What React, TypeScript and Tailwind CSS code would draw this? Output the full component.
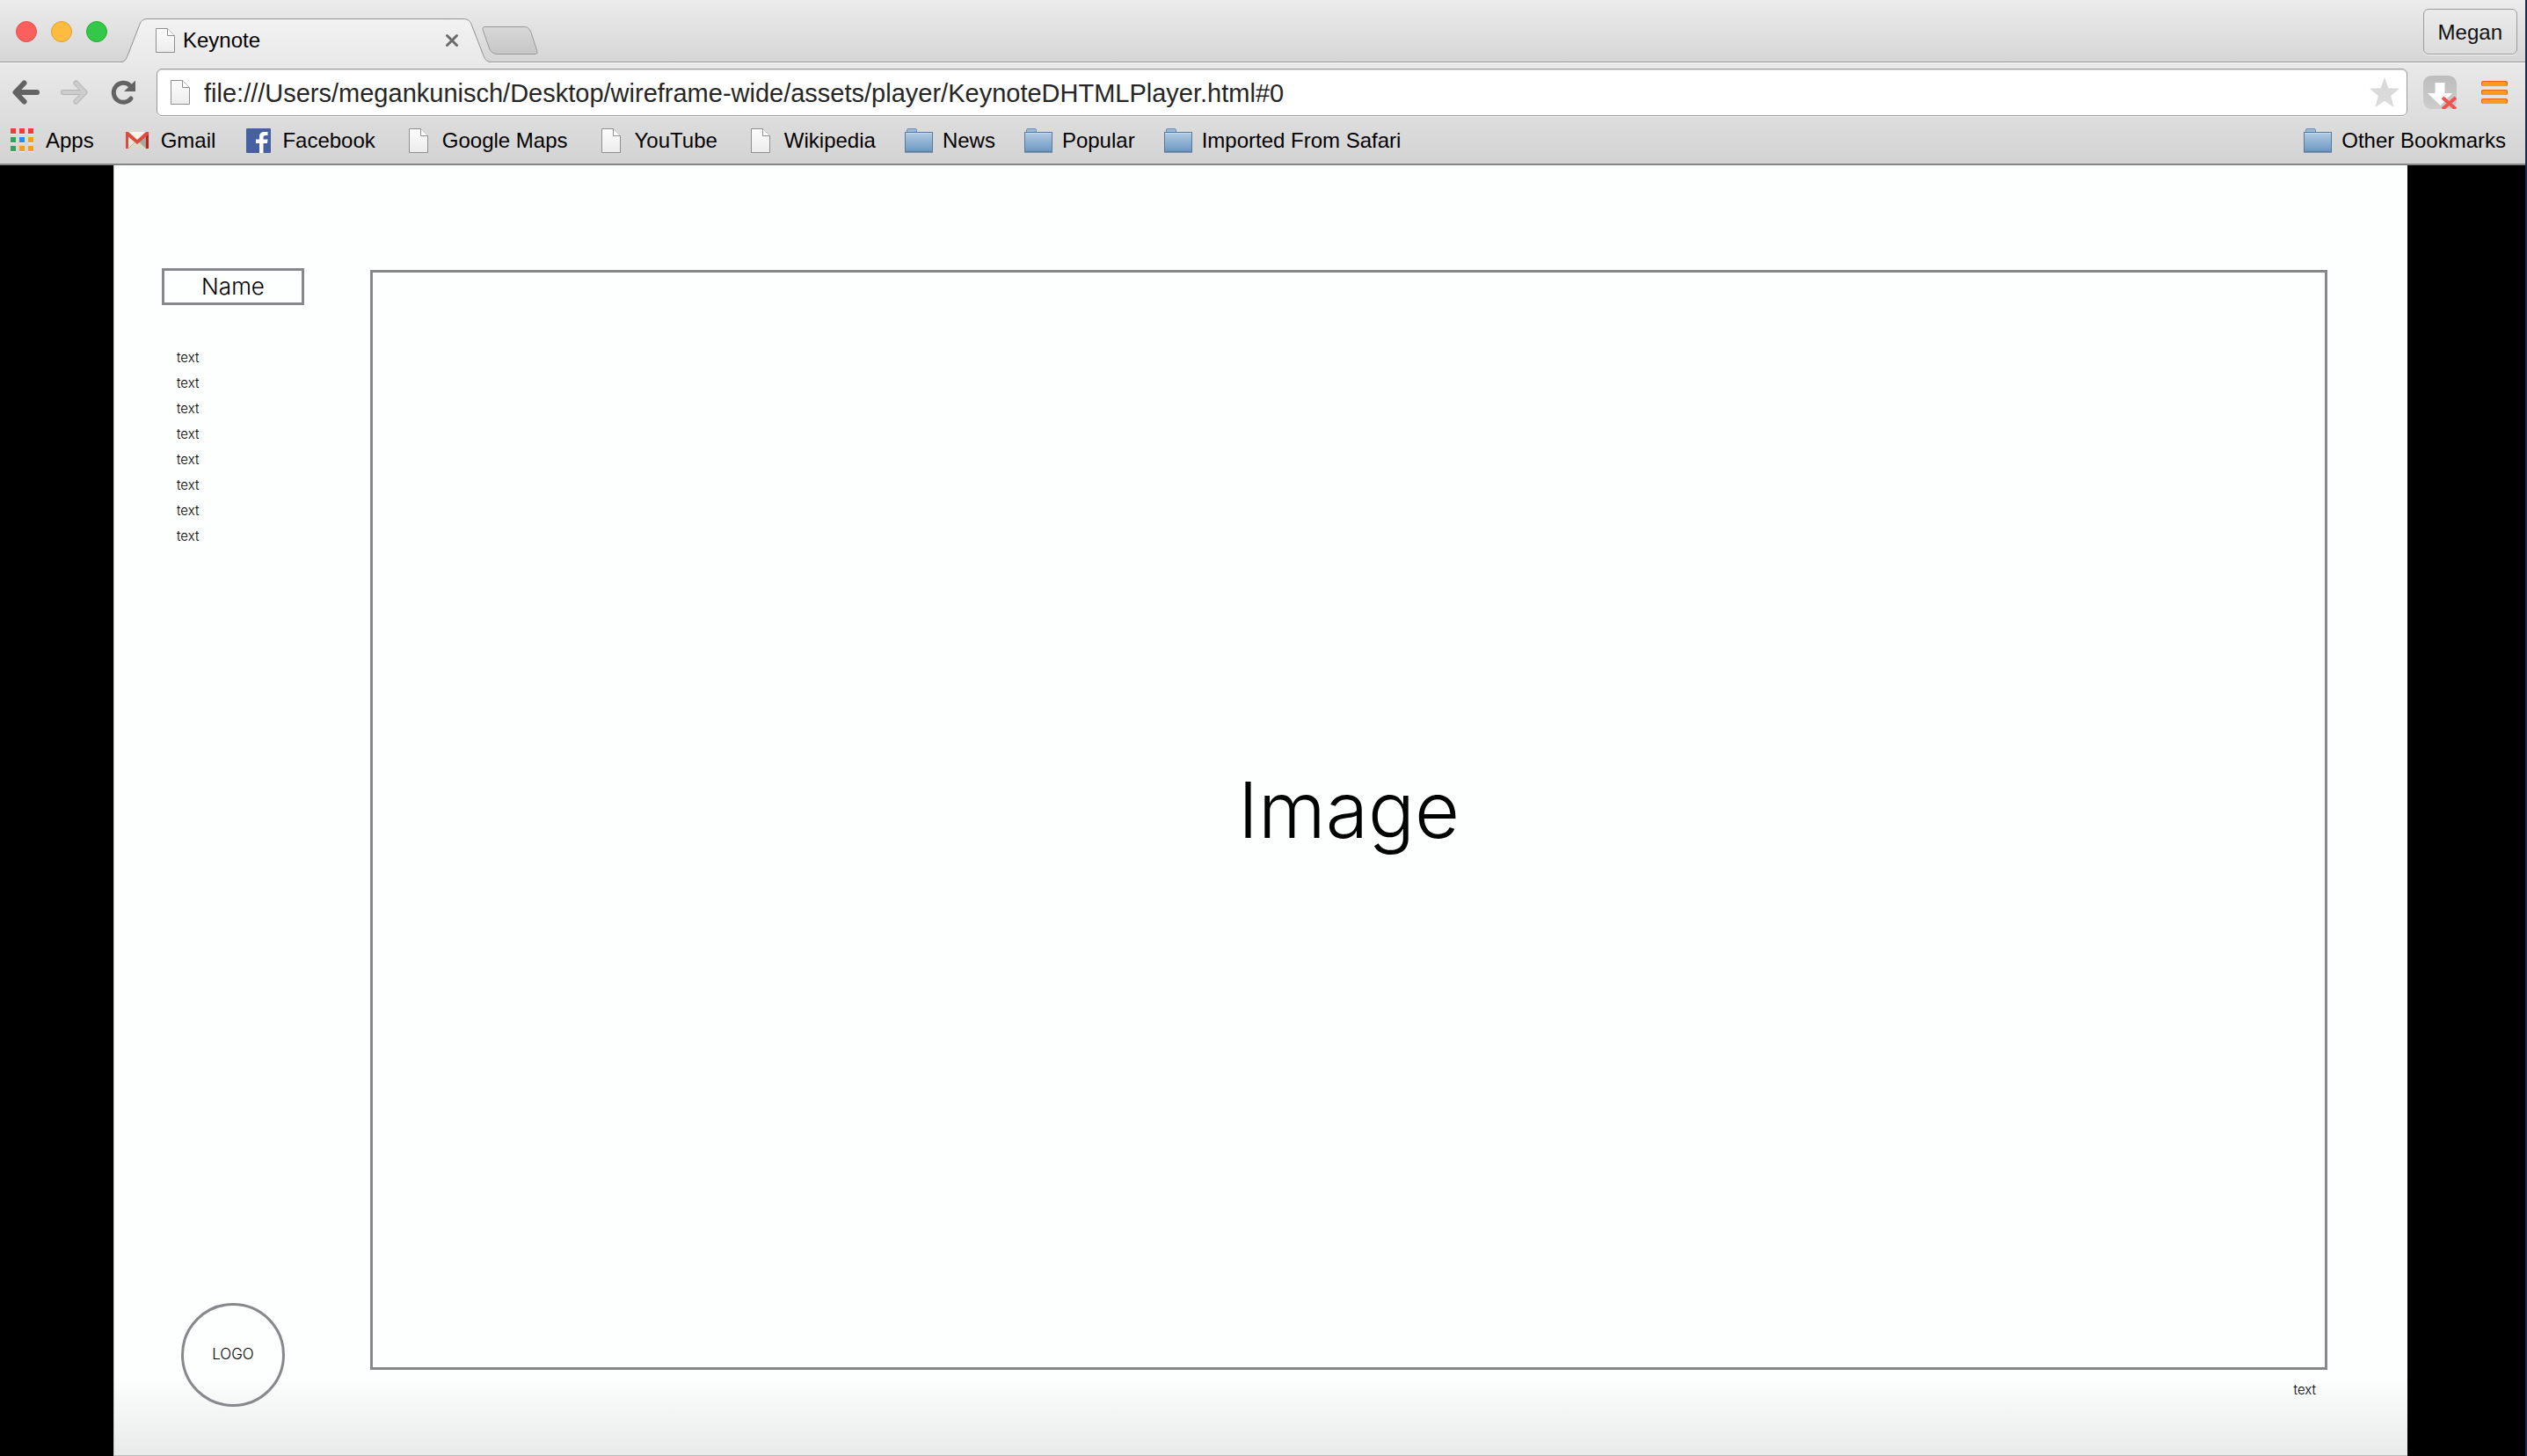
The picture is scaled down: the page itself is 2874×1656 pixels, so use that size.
import React from "react";

function PageIcon({ className }: { className?: string }) {
  return (
    <svg viewBox="0 0 22 28" className={className} aria-hidden="true">
      <defs>
        <linearGradient id="page-fill" x1="0" y1="0" x2="0" y2="1">
          <stop offset="0" stopColor="#fdfdfd" />
          <stop offset="1" stopColor="#ececec" />
        </linearGradient>
      </defs>
      <path d="M0.5 0.5H13.5L21.5 8.500V27.500H0.500Z" fill="url(#page-fill)" stroke="#8f8f8f" />
      <path d="M13.500 0.500V8.500H21.500" fill="#fff" stroke="#8f8f8f" />
    </svg>
  );
}

function FolderIcon() {
  return (
    <svg viewBox="0 0 32 28" className="h-7 w-8" aria-hidden="true">
      <defs>
        <linearGradient id="folder-fill" x1="0" y1="0" x2="0" y2="1">
          <stop offset="0" stopColor="#b3cbe2" />
          <stop offset="1" stopColor="#6b97c3" />
        </linearGradient>
      </defs>
      <path d="M2.500 5V2Q2.500 0.500 4 0.500H12Q13.500 0.500 13.500 2V5" fill="#9db9d8" stroke="#6d8db0" />
      <rect x="0.500" y="4.500" width="31" height="22" fill="url(#folder-fill)" stroke="#56799c" />
      <path d="M1 5.500H31" stroke="#c9dcec" />
      <path d="M0 27.500H32" stroke="#8d9aa6" />
    </svg>
  );
}

function AppsIcon() {
  const colors = ["#f33a36", "#f33a36", "#f33a36", "#36a05c", "#2a8cf2", "#f0a122", "#36a05c", "#f0a122", "#f0a122"];
  return (
    <svg viewBox="0 0 26 27" className="h-[27px] w-[26px]" aria-hidden="true">
      {colors.map((c, i) => (
        <g key={i}>
          <rect x={(i % 3) * 10} y={Math.floor(i / 3) * 10 + 1} width="6" height="6" fill="#f6f6f6" />
          <rect x={(i % 3) * 10} y={Math.floor(i / 3) * 10} width="6" height="6" fill={c} />
        </g>
      ))}
    </svg>
  );
}

function GmailIcon() {
  return (
    <svg viewBox="0 0 26 20" className="h-5 w-[26px]" aria-hidden="true">
      <rect width="26" height="19" fill="#e9e6d8" />
      <path d="M3 0H23L13 9Z" fill="#f7f4ea" />
      <path d="M13 11L23 19V3Z" fill="#a9a799" />
      <path d="M3 19L13 10L23 19Z" fill="#dcd9c6" />
      <path d="M3 19L10 12M23 19L16 12" stroke="#bab7a4" fill="none" />
      <path d="M0 0H3V19H0Z" fill="#e04a3f" />
      <path d="M23 0H26V19H23Z" fill="#b5281f" />
      <path d="M0 0H3L13 9L23 0H26V3L13 14L0 3Z" fill="#e04a3f" />
    </svg>
  );
}

function FacebookIcon() {
  return (
    <svg viewBox="0 0 28 28" className="size-7" aria-hidden="true">
      <rect width="28" height="28" rx="1" fill="#4660a2" />
      <path d="M15 28V17H11V12.500H15V9.500C15 5.500 17.500 4 20.500 4H24.500V8H22C20 8 19.500 9 19.500 10.500V12.500H24.500L24 17H19.500V28Z" fill="#fff" />
    </svg>
  );
}

const page = <PageIcon className="h-7 w-[22px]" />;

const bookmarks = [
  { label: "Apps", icon: <AppsIcon /> },
  { label: "Gmail", icon: <GmailIcon /> },
  { label: "Facebook", icon: <FacebookIcon /> },
  { label: "Google Maps", icon: page },
  { label: "YouTube", icon: page },
  { label: "Wikipedia", icon: page },
  { label: "News", icon: <FolderIcon /> },
  { label: "Popular", icon: <FolderIcon /> },
  { label: "Imported From Safari", icon: <FolderIcon /> },
];

function Bookmark({ label, icon }: { label: string; icon: React.ReactNode }) {
  return (
    <a href="#" className="flex items-center gap-[11px] whitespace-nowrap">
      <span className="flex w-8 justify-center">{icon}</span>
      {label}
    </a>
  );
}

function TabStrip() {
  return (
    <div className="flex h-[72px] items-end justify-between bg-linear-to-b from-[#ececec] to-[#d5d5d5] shadow-[inset_0_-1px_0_#f8f8f8,inset_0_-2px_0_#989898]">
      <div className="flex items-end">
        <div className="flex gap-4 pb-6 pl-[18px]">
          <button aria-label="Close window" className="size-6 rounded-full border border-[#e2504b] bg-[#fc605c]" />
          <button aria-label="Minimize window" className="size-6 rounded-full border border-[#dfa033] bg-[#fdbc40]" />
          <button aria-label="Zoom window" className="size-6 rounded-full border border-[#27a835] bg-[#34c84a]" />
        </div>
        <div className="relative ml-4 flex h-[51px] w-[422px] items-center pb-px pl-[39px]">
          <svg viewBox="0 0 422 51" preserveAspectRatio="none" className="absolute inset-0 size-full" aria-hidden="true">
            <defs>
              <linearGradient id="tab-fill" x1="0" y1="0" x2="0" y2="1">
                <stop offset="0" stopColor="#f2f2f2" />
                <stop offset="1" stopColor="#e9e9e9" />
              </linearGradient>
            </defs>
            <path
              d="M0 49.500C5 49 6 45 8 40L20 9C22 3 24 0.500 30 0.500H388C395 0.500 397 3 399 9L411 40C413 45 414 49 420 49.500V51H0Z"
              fill="url(#tab-fill)"
            />
            <path
              d="M0 49.500C5 49 6 45 8 40L20 9C22 3 24 0.500 30 0.500H388C395 0.500 397 3 399 9L411 40C413 45 414 49 420 49.500"
              fill="none"
              stroke="#929292"
            />
          </svg>
          <button className="relative flex flex-1 items-center gap-[9px] text-left text-2xl leading-7">
            <PageIcon className="h-7 w-[22px]" />
            Keynote
          </button>
          <button aria-label="Close tab" className="relative mr-[38px]">
            <svg viewBox="0 0 16 16" className="size-4" aria-hidden="true">
              <path d="M2.500 2.500L13.500 13.500M13.500 2.500L2.500 13.500" stroke="#6b6b6b" strokeWidth="3" strokeLinecap="round" />
            </svg>
          </button>
        </div>
        <button aria-label="New tab" className="-ml-3 pb-[9px]">
          <svg viewBox="0 0 64 34" className="h-[34px] w-16" aria-hidden="true">
            <defs>
              <linearGradient id="newtab-fill" x1="0" y1="0" x2="0" y2="1">
                <stop offset="0" stopColor="#d8d8d8" />
                <stop offset="1" stopColor="#c6c6c6" />
              </linearGradient>
            </defs>
            <path
              d="M4 1.500H47C52 1.500 54 3 56 8L62.500 28C63.500 31 63 32.500 60 32.500H18C13 32.500 10 30 8.500 26L1.500 6C0.500 3 1 1.500 4 1.500Z"
              fill="url(#newtab-fill)"
              stroke="#999"
            />
          </svg>
        </button>
      </div>
      <button className="mr-[9px] mb-[10px] h-[52px] rounded-md border border-[#9c9c9c] bg-linear-to-b from-[#ebebeb] to-[#dcdcdc] px-4 pt-px text-2xl text-[#111] shadow-[0_1px_0_#f4f4f4]">
        Megan
      </button>
    </div>
  );
}

function NavBar() {
  return (
    <div className="flex h-[66px] items-center pr-5 pl-[13px]">
      <div className="flex items-center gap-6 pr-[23px]">
        <button aria-label="Back">
          <svg viewBox="0 0 32 30" className="h-[30px] w-8" fill="none" stroke="#636363" strokeWidth="6" strokeLinecap="round" strokeLinejoin="round" aria-hidden="true">
            <path d="M14.500 4.500L4.500 15L14.500 25.500M5.500 15H29" />
          </svg>
        </button>
        <button aria-label="Forward">
          <svg viewBox="0 0 32 30" className="h-[30px] w-8" fill="none" strokeLinecap="round" strokeLinejoin="round" aria-hidden="true">
            <path d="M17.500 4.500L27.500 15L17.500 25.500M26.500 15H3" stroke="#b4b4b4" strokeWidth="6" />
            <path d="M17.500 4.500L27.500 15L17.500 25.500M26.500 15H3" stroke="#cdcdcd" strokeWidth="4" />
          </svg>
        </button>
        <button aria-label="Reload">
          <svg viewBox="0 0 30 30" className="size-[30px]" aria-hidden="true">
            <path d="M24 22A11 11 0 1 1 22.500 7" fill="none" stroke="#636363" strokeWidth="5" strokeLinecap="round" />
            <path d="M29 1.500V14H16Z" fill="#636363" />
          </svg>
        </button>
      </div>
      <div className="flex h-[54px] flex-1 items-center rounded-md border border-[#9a9a9a] bg-white pr-2 pl-[15px] shadow-[inset_0_1px_1px_#dcdcdc,0_1px_0_#f2f2f2]">
        <PageIcon className="h-[30px] w-[22px]" />
        <input
          aria-label="Address"
          className="ml-4 min-w-0 flex-1 bg-transparent pt-0.5 text-[29px] leading-9 text-[#262626] outline-none"
          defaultValue="file:///Users/megankunisch/Desktop/wireframe-wide/assets/player/KeynoteDHTMLPlayer.html#0"
        />
        <button aria-label="Bookmark this page">
          <svg viewBox="0 0 34 34" className="size-[34px]" aria-hidden="true">
            <path d="M17 0L21.500 12.200L34 12.800L24.200 21L27.600 34L17 26.800L6.400 34L9.800 21L0 12.800L12.500 12.200Z" fill="#dadada" />
          </svg>
        </button>
      </div>
      <div className="flex items-center gap-7 pl-[18px]">
        <button aria-label="Downloads">
          <svg viewBox="0 0 38 38" className="size-[38px]" aria-hidden="true">
            <defs>
              <linearGradient id="dl-fill" x1="0" y1="0" x2="0" y2="1">
                <stop offset="0" stopColor="#bdbdbd" />
                <stop offset="1" stopColor="#cdcdcd" />
              </linearGradient>
            </defs>
            <rect width="38" height="38" rx="9" fill="url(#dl-fill)" />
            <path d="M13.500 8H24.500V20H33L19.500 34L5 20H13.500Z" fill="#fff" />
            <path d="M22 25L37 38M37 25L22 38" stroke="#ee5350" strokeWidth="4" />
          </svg>
        </button>
        <button aria-label="Menu">
          <svg viewBox="0 0 30 27" className="h-[27px] w-[30px]" aria-hidden="true">
            {[0, 10, 20].map((y) => (
              <g key={y}>
                <rect x="0" y={y} width="30" height="6" rx="2" fill="#e4641c" />
                <rect x="1" y={y + 1} width="28" height="5" rx="2" fill="#fb9a20" />
              </g>
            ))}
          </svg>
        </button>
      </div>
    </div>
  );
}

export default function App() {
  return (
    <div className="flex min-h-screen flex-col border-r-2 border-[#1b2a55] bg-black font-['Liberation_Sans',Arial,sans-serif] text-black">
      <header>
        <TabStrip />
        <div className="border-b-2 border-[#868686] bg-linear-to-b from-[#e9e9e9] to-[#d3d3d3]">
          <NavBar />
          <nav className="flex h-12 items-center justify-between pt-px pr-[22px] pb-[6px] pl-[9px] text-2xl">
            <div className="flex gap-[33px]">
              {bookmarks.map((b) => (
                <Bookmark key={b.label} {...b} />
              ))}
            </div>
            <Bookmark label="Other Bookmarks" icon={<FolderIcon />} />
          </nav>
        </div>
      </header>

      <main className="mr-[134px] ml-[129px] flex flex-1 border-b border-l border-b-[#bdbdbd] border-l-[#c4c4c4] bg-[#fdfefe] bg-linear-to-t from-[#e9eaea] to-transparent bg-[length:100%_90px] bg-bottom bg-no-repeat pr-[91px] pl-[54px] font-['Inter','Liberation_Sans',sans-serif] font-light">
        <aside className="flex w-[162px] flex-col pt-[117px] pb-[55px]">
          <h1 className="flex h-[42px] items-center justify-center border-3 border-[#88888c] pb-px text-[26px]">Name</h1>
          <ul className="mt-[45px] pl-[17px] text-[15px] leading-[29px]">
            {Array.from({ length: 8 }, (_, i) => (
              <li key={i}>text</li>
            ))}
          </ul>
          <div className="mt-auto flex size-[118px] items-center justify-center self-center rounded-full border-3 border-[#88888c] text-[17px]">
            LOGO
          </div>
        </aside>
        <section className="ml-[75px] flex flex-1 flex-col pt-[119px] pb-[62px]">
          <div className="flex flex-1 items-center justify-center border-3 border-[#88888c] pb-6 text-[88px] leading-none">Image</div>
          <p className="mt-[11px] pr-[13px] text-right text-[15px] leading-6">text</p>
        </section>
      </main>
    </div>
  );
}
